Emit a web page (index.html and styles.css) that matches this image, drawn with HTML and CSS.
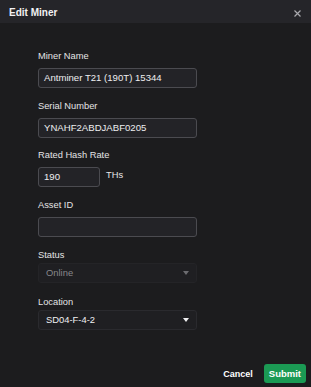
FILE: index.html
```html
<!DOCTYPE html>
<html>
<head>
<meta charset="utf-8">
<link rel="stylesheet" href="styles.css">
</head>
<body>
<div class="modal">
  <header class="modal-header">
    <h1 class="title">Edit Miner</h1>
    <button class="close" aria-label="Close">
      <svg width="7" height="7" viewBox="0 0 7 7"><path d="M0.5 0.5 L6.5 6.5 M6.5 0.5 L0.5 6.5" stroke="#a9a9ad" stroke-width="1.2" fill="none"/></svg>
    </button>
  </header>
  <form class="form">
    <div class="field">
      <label class="label">Miner Name</label>
      <div class="input">Antminer T21 (190T) 15344</div>
    </div>
    <div class="field">
      <label class="label">Serial Number</label>
      <div class="input">YNAHF2ABDJABF0205</div>
    </div>
    <div class="field">
      <label class="label">Rated Hash Rate</label>
      <div class="row">
        <div class="input short">190</div>
        <span class="unit">THs</span>
      </div>
    </div>
    <div class="field">
      <label class="label">Asset ID</label>
      <div class="input"></div>
    </div>
    <div class="field sel">
      <label class="label">Status</label>
      <div class="select disabled"><span>Online</span><i class="caret"></i></div>
    </div>
    <div class="field sel">
      <label class="label">Location</label>
      <div class="select"><span>SD04-F-4-2</span><i class="caret"></i></div>
    </div>
  </form>
  <footer class="footer">
    <button class="btn cancel">Cancel</button>
    <button class="btn submit">Submit</button>
  </footer>
</div>
</body>
</html>
```
FILE: styles.css
```css
* { box-sizing: border-box; }
html, body { margin: 0; padding: 0; }
body {
  width: 311px;
  height: 387px;
  background: #1c1c1e;
  font-family: "Liberation Sans", Arial, sans-serif;
  color: #e6e6e8;
  overflow: hidden;
}
.modal { display: flex; flex-direction: column; height: 387px; }
.modal-header {
  height: 23px;
  flex: none;
  background: #252529;
  display: flex;
  align-items: center;
  justify-content: space-between;
  padding: 0 8px 0 9px;
}
.title {
  margin: 0;
  font-size: 10px;
  font-weight: 700;
  color: #f2f2f4;
  padding-top: 1px;
}
.close {
  background: none;
  border: 0;
  padding: 0;
  margin-top: 4px;
  margin-right: 2px;
  width: 7px;
  height: 7px;
  display: flex;
}
.form {
  display: flex;
  flex-direction: column;
  padding: 28px 0 0 38px;
  width: 198px;
}
.field { display: flex; flex-direction: column; margin-bottom: 12.7px; }
.label {
  font-size: 9.3px;
  line-height: 10px;
  height: 10px;
  color: #e4e4e6;
  margin-bottom: 7px;
}
.input {
  height: 20px;
  width: 159px;
  border: 1px solid #4b4b50;
  border-radius: 3px;
  background: #232327;
  font-size: 9.6px;
  line-height: 18px;
  padding-left: 5px;
  color: #eeeef0;
}
.row { display: flex; align-items: flex-start; }
.input.short { width: 62px; }
.unit { font-size: 9.3px; margin-left: 6px; margin-top: 3px; color: #e6e6e8; }
.field.sel .label { margin-bottom: 3px; }
.field.sel { margin-bottom: 14px; }
.select {
  height: 20px;
  width: 159px;
  border: 1px solid #2a2a2e;
  border-radius: 3px;
  background: #1f1f22;
  display: flex;
  align-items: center;
  justify-content: space-between;
  padding: 0 7px 0 7px;
  font-size: 9.4px;
  color: #f0f0f2;
}
.select.disabled { color: #88888c; border-color: #242427; }
.caret {
  width: 0; height: 0;
  border-left: 3px solid transparent;
  border-right: 3px solid transparent;
  border-top: 4px solid #f0f0f2;
  margin-top: 1px;
}
.select.disabled .caret { border-top-color: #6c6c70; }
.footer {
  margin-top: auto;
  display: flex;
  justify-content: flex-end;
  align-items: center;
  gap: 11px;
  padding: 0 5px 4px 0;
}
.btn {
  font-family: "Liberation Sans", Arial, sans-serif;
  font-size: 9.5px;
  font-weight: 700;
  border: 0;
  color: #ffffff;
  cursor: pointer;
}
.cancel { background: none; padding: 0; font-size: 9px; }
.submit {
  background: #1b9a54;
  height: 19px;
  padding: 0 5px;
  border-radius: 3px;
}
```
